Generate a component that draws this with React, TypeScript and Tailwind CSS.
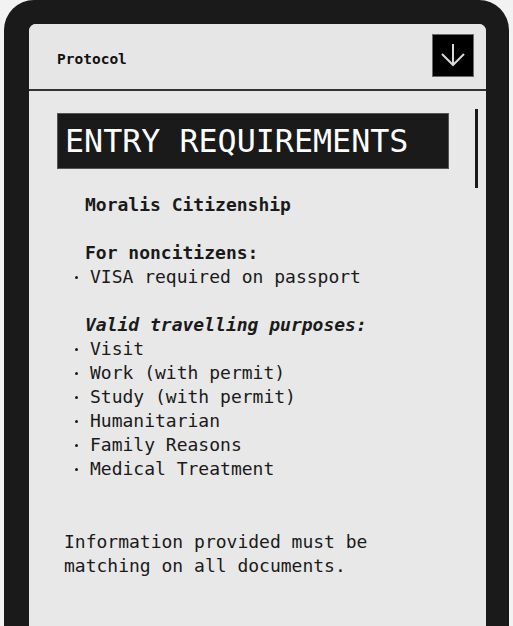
import React from "react";

const mono = "font-['DejaVu_Sans_Mono','Liberation_Mono',monospace]";

const purposes = [
  "Visit",
  "Work (with permit)",
  "Study (with permit)",
  "Humanitarian",
  "Family Reasons",
  "Medical Treatment",
];

const Bullet = ({ children }: { children: React.ReactNode }) => (
  <div className="flex items-center h-6">
    <span className="w-[3px] h-[3px] rounded-full bg-[#1a1a1a] ml-[18px] mr-[12px]" />
    <span>{children}</span>
  </div>
);

const App = () => {
  return (
    <div className={`h-[626px] w-[513px] bg-[#f2f2f2] overflow-hidden ${mono}`}>
      {/* device frame */}
      <div className="ml-[4px] w-[505px] h-full bg-[#1a1a1a] rounded-t-[30px] pt-[24px] pl-[25px] pr-[23px]">
        <div className="h-full bg-[#e8e8e8] rounded-t-[7px] flex flex-col overflow-hidden">
          {/* header */}
          <div className="h-[67px] bg-[#e6e6e6] border-b-2 border-[#333] flex items-center justify-between pl-[28px] pr-[12px] pb-[1px]">
            <span className="text-[14.5px] font-bold text-[#111] mt-[8px]">Protocol</span>
            <button className="w-[42px] h-[43px] bg-black border border-[#6a6a6a] flex items-center justify-center -mt-[2px]">
              <svg width="26" height="26" viewBox="0 0 26 26" fill="none" stroke="#d9d9d9" strokeWidth="2">
                <path d="M13 2v21" />
                <path d="M2 12l11 11 11-11" />
              </svg>
            </button>
          </div>

          {/* content */}
          <div className="flex flex-1">
            <div className="flex-1 pl-[28px] pt-[22px] text-[18px] leading-6 text-[#1a1a1a]">
              <div className="w-[392px] h-[56px] bg-[#1a1a1a] border border-[#555] flex items-center pl-[7px]">
                <span className="text-[31.7px] font-light text-white">ENTRY REQUIREMENTS</span>
              </div>

              <div className="mt-[24px] pl-[28px] font-bold">Moralis Citizenship</div>
              <div className="h-6" />
              <div className="pl-[28px] font-bold">For noncitizens:</div>
              <Bullet>VISA required on passport</Bullet>
              <div className="h-6" />
              <div className="pl-[28px] font-bold italic">Valid travelling purposes:</div>
              {purposes.map((p) => (
                <Bullet key={p}>{p}</Bullet>
              ))}

              <div className="mt-[49px] pl-[7px]">
                Information provided must be
                <br />
                matching on all documents.
              </div>
            </div>
            {/* scrollbar */}
            <div className="w-[3px] h-[79px] bg-[#1a1a1a] mt-[18px] mr-[8px]" />
          </div>
        </div>
      </div>
    </div>
  );
};

export default App;
